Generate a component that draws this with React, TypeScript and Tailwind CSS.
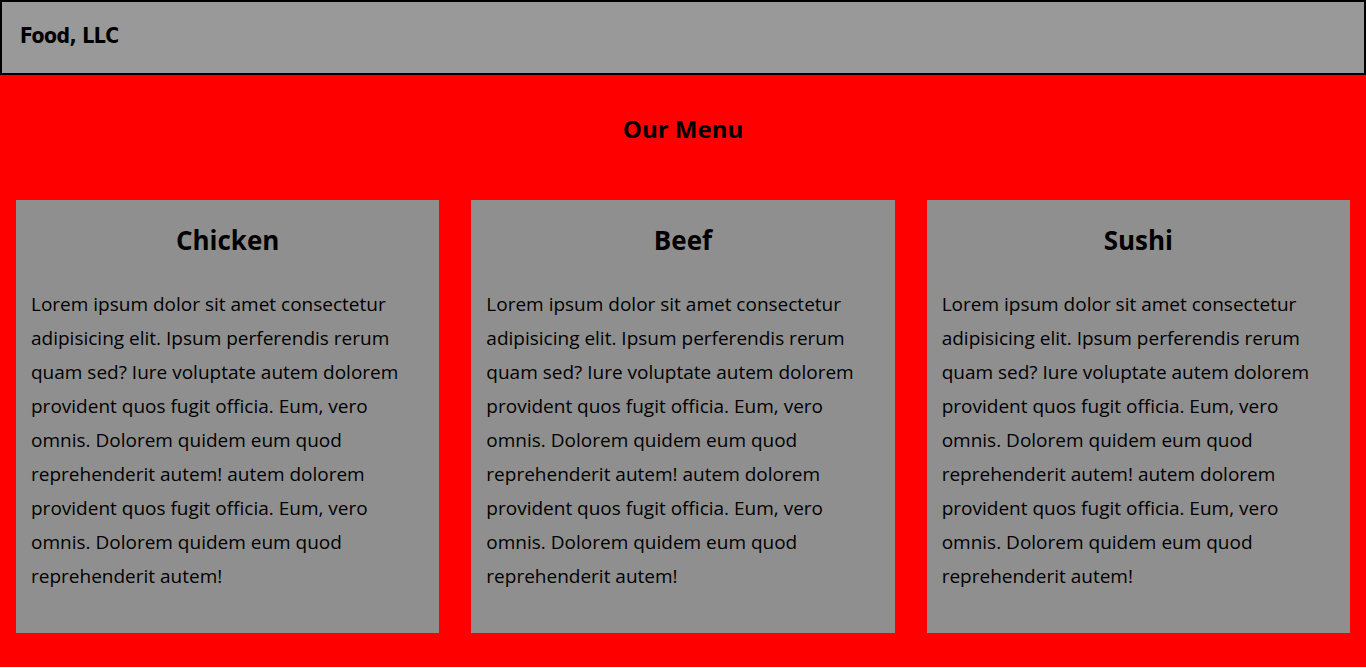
const items = ["Chicken", "Beef", "Sushi"];

const lorem =
  "Lorem ipsum dolor sit amet consectetur adipisicing elit. Ipsum perferendis rerum quam sed? Iure voluptate autem dolorem provident quos fugit officia. Eum, vero omnis. Dolorem quidem eum quod reprehenderit autem! autem dolorem provident quos fugit officia. Eum, vero omnis. Dolorem quidem eum quod reprehenderit autem!";

const MenuCard = ({ title }: { title: string }) => {
  return (
    <div className="bg-[#8f8f8f] px-[15px] pt-[20px] pb-[40px]">
      <h2 className="text-center text-[26px] font-bold leading-[40px] text-black">
        {title}
      </h2>
      <p className="mt-[27px] text-[19px] leading-[34px] text-black">{lorem}</p>
    </div>
  );
};

export default function App() {
  return (
    <div className="min-h-[667px] bg-[#ff0000] font-['Open_Sans',sans-serif] text-black">
      <header className="flex h-[75px] items-center border-2 border-black bg-[#999999] px-[18px]">
        <h1 className="-mt-[2px] font-['DejaVu_Sans_Condensed','DejaVu_Sans',sans-serif] text-[21px] font-bold tracking-[-0.5px]">
          Food, LLC
        </h1>
      </header>
      <section className="px-[16px] pb-[34px]">
        <h2 className="pt-[29px] pb-[46px] text-center text-[24px] font-bold leading-[50px]">
          Our Menu
        </h2>
        <div className="grid grid-cols-3 gap-[32px]">
          {items.map((item) => (
            <MenuCard key={item} title={item} />
          ))}
        </div>
      </section>
    </div>
  );
}
